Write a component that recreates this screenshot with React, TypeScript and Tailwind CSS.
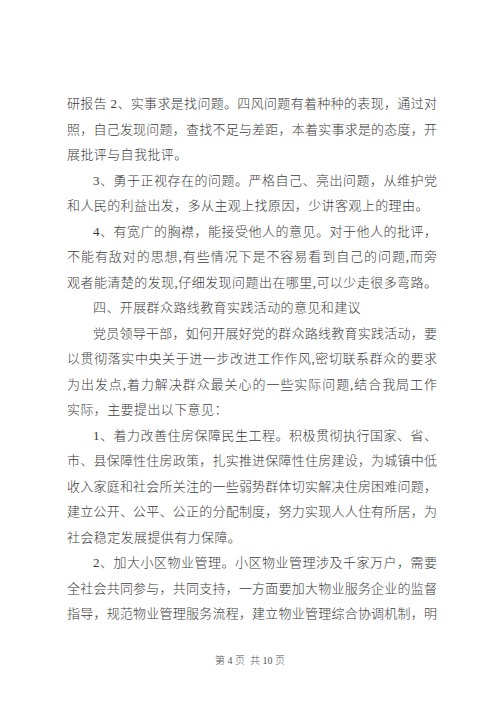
import React from "react";

type Line = { t: string; indent?: boolean; last?: boolean };

const lines: Line[] = [
  { t: "研报告 2、实事求是找问题。四风问题有着种种的表现，通过对" },
  { t: "照，自己发现问题，查找不足与差距，本着实事求是的态度，开" },
  { t: "展批评与自我批评。", last: true },
  { t: "3、勇于正视存在的问题。严格自己、亮出问题，从维护党", indent: true },
  { t: "和人民的利益出发，多从主观上找原因，少讲客观上的理由。", last: true },
  { t: "4、有宽广的胸襟，能接受他人的意见。对于他人的批评，", indent: true },
  { t: "不能有敌对的思想,有些情况下是不容易看到自己的问题,而旁" },
  { t: "观者能清楚的发现,仔细发现问题出在哪里,可以少走很多弯路。" },
  { t: "四、开展群众路线教育实践活动的意见和建议", indent: true, last: true },
  { t: "党员领导干部，如何开展好党的群众路线教育实践活动，要", indent: true },
  { t: "以贯彻落实中央关于进一步改进工作作风,密切联系群众的要求" },
  { t: "为出发点,着力解决群众最关心的一些实际问题,结合我局工作" },
  { t: "实际，主要提出以下意见：", last: true },
  { t: "1、着力改善住房保障民生工程。积极贯彻执行国家、省、", indent: true },
  { t: "市、县保障性住房政策，扎实推进保障性住房建设，为城镇中低" },
  { t: "收入家庭和社会所关注的一些弱势群体切实解决住房困难问题，" },
  { t: "建立公开、公平、公正的分配制度，努力实现人人住有所居，为" },
  { t: "社会稳定发展提供有力保障。", last: true },
  { t: "2、加大小区物业管理。小区物业管理涉及千家万户，需要", indent: true },
  { t: "全社会共同参与，共同支持，一方面要加大物业服务企业的监督" },
  { t: "指导，规范物业管理服务流程，建立物业管理综合协调机制，明" },
];

export default function App() {
  return (
    <div
      className="w-[500px] h-[707px] bg-white flex flex-col text-[#3c3c3c]"
      style={{ fontFamily: '"Liberation Serif", "Noto Sans CJK SC", serif' }}
    >
      <div className="pt-[91px] pl-[67px] pr-[63px] text-[13px] leading-[25.5px] font-light">
        {lines.map((l, i) => (
          <div
            key={i}
            className={
              (l.indent ? "pl-[26px] " : "") +
              (l.last
                ? "text-left whitespace-nowrap tracking-[0.4px]"
                : "text-justify [text-align-last:justify] whitespace-nowrap")
            }
          >
            {l.t}
          </div>
        ))}
      </div>
      <div className="mt-[27px] text-center text-[10px] leading-[14px] font-light text-[#555]">
        第 4 页&nbsp; 共 10 页
      </div>
    </div>
  );
}
